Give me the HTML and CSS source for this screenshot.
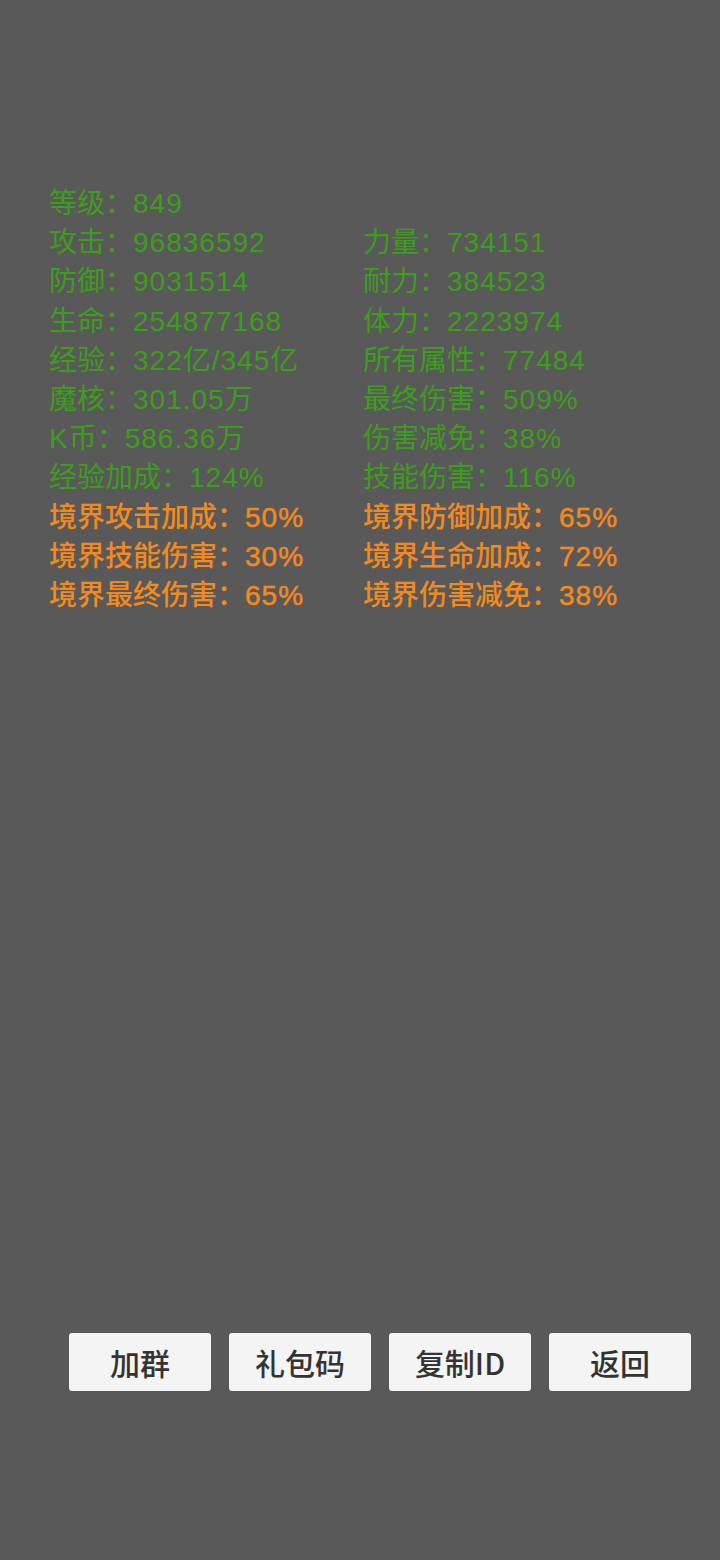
FILE: index.html
```html
<!DOCTYPE html>
<html lang="zh">
<head>
<meta charset="utf-8">
<link rel="stylesheet" href="styles.css">
</head>
<body>
<div class="page">
  <div class="stats">
    <div class="cell green">等级：<span class="v">849</span></div><div class="cell"></div>
    <div class="cell green">攻击：<span class="v">96836592</span></div><div class="cell green">力量：<span class="v">734151</span></div>
    <div class="cell green">防御：<span class="v">9031514</span></div><div class="cell green">耐力：<span class="v">384523</span></div>
    <div class="cell green">生命：<span class="v">254877168</span></div><div class="cell green">体力：<span class="v">2223974</span></div>
    <div class="cell green">经验：<span class="v">322亿/345亿</span></div><div class="cell green">所有属性：<span class="v">77484</span></div>
    <div class="cell green">魔核：<span class="v">301.05万</span></div><div class="cell green">最终伤害：<span class="v">509%</span></div>
    <div class="cell green"><span class="v">K</span>币：<span class="v">586.36万</span></div><div class="cell green">伤害减免：<span class="v">38%</span></div>
    <div class="cell green">经验加成：<span class="v">124%</span></div><div class="cell green">技能伤害：<span class="v">116%</span></div>
    <div class="cell orange">境界攻击加成：<span class="v">50%</span></div><div class="cell orange">境界防御加成：<span class="v">65%</span></div>
    <div class="cell orange">境界技能伤害：<span class="v">30%</span></div><div class="cell orange">境界生命加成：<span class="v">72%</span></div>
    <div class="cell orange">境界最终伤害：<span class="v">65%</span></div><div class="cell orange">境界伤害减免：<span class="v">38%</span></div>
  </div>
  <div class="buttons">
    <div class="btn">加群</div>
    <div class="btn">礼包码</div>
    <div class="btn">复制ID</div>
    <div class="btn">返回</div>
  </div>
</div>
</body>
</html>
```
FILE: styles.css
```css
html, body {
  margin: 0;
  padding: 0;
  background: #595959;
}
body {
  width: 720px;
  height: 1560px;
  overflow: hidden;
  font-family: "Noto Sans CJK SC", "Noto Sans", sans-serif;
}
.page {
  display: flex;
  flex-direction: column;
}
.stats {
  display: grid;
  grid-template-columns: 314px 1fr;
  padding: 182px 0 0 49px;
  font-size: 28px;
  line-height: 39.2px;
}
.cell {
  white-space: nowrap;
  height: 39.2px;
}
.v {
  font-family: "Liberation Sans", "Noto Sans CJK SC", sans-serif;
  letter-spacing: 1px;
}
.green {
  color: #3d9e1b;
}
.orange {
  color: #f28a1e;
  font-weight: 500;
}
.orange .v {
  font-weight: 400;
  -webkit-text-stroke: 0.5px #f28a1e;
}
.buttons {
  display: flex;
  gap: 18px;
  padding-left: 69px;
  margin-top: 720px;
}
.btn {
  width: 142px;
  height: 58px;
  background: #f4f4f4;
  border-radius: 3px;
  display: flex;
  align-items: center;
  justify-content: center;
  font-size: 30px;
  font-weight: 500;
  color: #333333;
}
```
